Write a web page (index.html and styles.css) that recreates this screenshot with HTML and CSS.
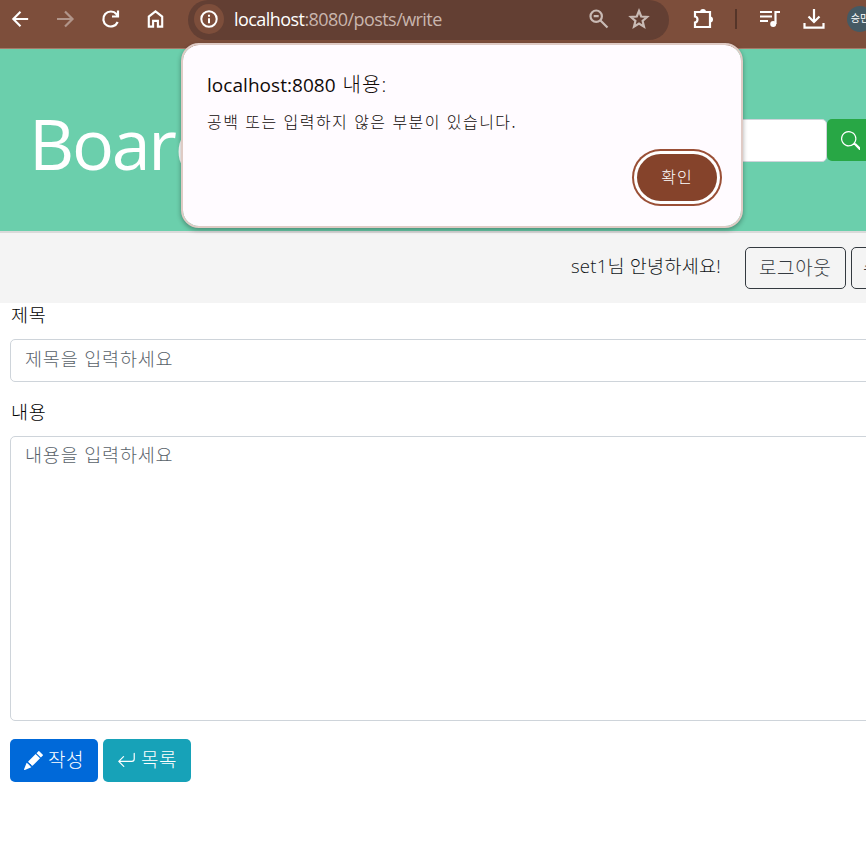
FILE: index.html
```html
<!DOCTYPE html>
<html lang="ko">
<head>
<meta charset="utf-8">
<title>Board</title>
<link rel="stylesheet" href="styles.css">
</head>
<body>
<div class="browser">
  <svg class="ic back" viewBox="0 0 24 24"><path d="M20 12H4.500M12 4.500 4.500 12l7.500 7.500"/></svg>
  <svg class="ic forward" viewBox="0 0 24 24"><path d="M4 12h15.500M12 4.500 19.500 12 12 19.500"/></svg>
  <svg class="ic reload" viewBox="0 0 24 24"><path d="M18.700 15A7.500 7.500 0 1 1 17.600 7.200L19 9M19 3.500v6h-6"/></svg>
  <svg class="ic home" viewBox="0 0 24 24"><path d="M5 20V9.500l7-5.500 7 5.500V20h-4.500v-6h-5v6z"/></svg>
  <div class="omnibox">
    <span class="info"><svg viewBox="0 0 20 20"><circle cx="10" cy="10" r="7.700"/><path d="M10 9.200v5M10 5.700v2"/></svg></span>
    <span class="url">localhost<span>:8080/posts/write</span></span>
    <svg class="ic lens" viewBox="0 0 24 24"><circle cx="9.200" cy="9.200" r="5.700"/><path d="m13.500 13.500 7 7M6.700 9.200h5"/></svg>
    <svg class="ic star" viewBox="0 0 24 24"><path d="m12 4 2.200 5.500 5.900.5-4.500 3.900 1.400 5.800-5-3.100-5 3.100 1.400-5.800L3.900 10l5.900-.5z"/></svg>
  </div>
  <svg class="ic puzzle" viewBox="0 0 24 24"><path d="M4 5h15v15H4v-4.500c3.300-.5 3.300-5.500 0-6z"/><path class="solid" d="M9 5a3 3 0 0 1 6 0zM19 9.500a3 3 0 0 1 0 6z"/></svg>
  <span class="divider"></span>
  <svg class="ic music" viewBox="0 0 24 24"><path d="M2 5h12M2 9.500h12M2 14h8M17.500 17V5H22"/><circle class="solid" cx="15.200" cy="17" r="3"/></svg>
  <svg class="ic download" viewBox="0 0 24 24"><path d="M12 2v13M6.500 9.500 12 15l5.500-5.500M2.500 16v4.700h19V16"/></svg>
  <span class="avatar">승민</span>
</div>
<header class="hero">
  <h1>Board</h1>
  <form class="search"><input aria-label="search"><button type="button" aria-label="search"><svg viewBox="0 0 16 16"><path d="M11.742 10.344a6.500 6.500 0 1 0-1.397 1.398h-.001c.3.040.62.078.98.115l3.850 3.850a1 1 0 0 0 1.415-1.414l-3.850-3.850a1 1 0 0 0-.115-.1zM12 6.500a5.500 5.500 0 1 1-11 0 5.500 5.500 0 0 1 11 0z"/></svg></button></form>
</header>
<nav class="userbar">
  <span class="hello">set1님 안녕하세요!</span>
  <button class="outline">로그아웃</button>
  <button class="outline">수정</button>
</nav>
<main>
  <label for="title">제목</label>
  <input id="title" class="field" placeholder="제목을 입력하세요">
  <label for="content">내용</label>
  <textarea id="content" class="field" placeholder="내용을 입력하세요"></textarea>
  <div class="actions">
    <button class="btn write"><svg viewBox="0 0 16 16"><path d="M12.854.146a.5.5 0 0 0-.707 0L10.500 1.793 14.207 5.500l1.647-1.646a.5.5 0 0 0 0-.708zm.646 6.061L9.793 2.500 3.293 9H3.500a.5.5 0 0 1 .5.5v.5h.5a.5.5 0 0 1 .5.5v.5h.5a.5.5 0 0 1 .5.5v.5h.5a.5.5 0 0 1 .5.5v.207zm-7.468 7.468A.5.5 0 0 1 6 13.500V13h-.5a.5.5 0 0 1-.5-.5V12h-.5a.5.5 0 0 1-.5-.5V11h-.5a.5.5 0 0 1-.5-.5V10h-.5a.5.5 0 0 1-.175-.032l-.179.178a.5.5 0 0 0-.11.168l-2 5a.5.5 0 0 0 .65.650l5-2a.5.5 0 0 0 .168-.11z"/></svg><span>작성</span></button>
    <button class="btn list"><svg viewBox="0 0 16 16"><path d="M14.500 1.500a.5.5 0 0 1 .5.5v4.800a2.500 2.500 0 0 1-2.500 2.500H2.707l3.347 3.346a.5.5 0 0 1-.708.708l-4.200-4.200a.5.5 0 0 1 0-.708l4-4a.5.5 0 1 1 .708.708L2.707 8.300H12.500A1.500 1.500 0 0 0 14 6.800V2a.5.5 0 0 1 .5-.5z"/></svg><span>목록</span></button>
  </div>
</main>
<section class="dialog" role="dialog">
  <h2>localhost:8080 <span>내용:</span></h2>
  <p>공백 또는 입력하지 않은 부분이 있습니다.</p>
  <button>확인</button>
</section>
</body>
</html>
```
FILE: styles.css
```css
* { box-sizing: border-box; }
body { margin: 0; height: 857px; overflow: hidden; position: relative; background: #fff; color: #212529; font: 300 18px/27px "Open Sans", "Noto Sans CJK KR", sans-serif; }
button, input, textarea { font: inherit; margin: 0; }
.browser { height: 49px; background: #7d4e3b; border-bottom: 1px solid #a57a69; display: flex; align-items: flex-start; overflow: hidden; color: #fff; }
.ic { width: 24px; height: 24px; flex: none; fill: none; stroke: #fff; stroke-width: 2.2; margin-top: 7px; }
.ic .solid { fill: #fff; stroke: none; }
.back { margin-left: 9px; width: 23px; }
.forward { margin-left: 21px; stroke: #b1958a; }
.reload { margin-left: 22px; }
.home { margin-left: 21px; width: 23px; }
.omnibox { width: 481px; height: 40px; margin-left: 21px; flex: none; border-radius: 20px; background: #633f33; display: flex; }
.omnibox .ic { stroke: #c9bab4; }
.info { width: 30px; height: 30px; margin: 4px 0 0 6px; border-radius: 50%; background: #7d4e3b; display: flex; align-items: center; justify-content: center; flex: none; }
.info svg { width: 20px; height: 20px; fill: none; stroke: #fff; stroke-width: 2; }
.url { font: 400 18px/28px "Open Sans", sans-serif; letter-spacing: -.56px; margin: 5px 0 0 10px; width: 353px; white-space: nowrap; }
.url span { color: #c9b5ad; }
.star { margin-left: 16px; }
.puzzle { margin-left: 22px; }
.divider { width: 2px; height: 20px; background: #553529; margin: 9px 0 0 20px; flex: none; }
.music { margin-left: 21px; }
.download { margin-left: 20px; }
.avatar { width: 26px; height: 26px; margin: 6px 0 0 21px; flex: none; border-radius: 50%; background: #455a64; font-size: 10px; line-height: 25px; text-align: center; font-weight: 400; white-space: nowrap; }
.hero { height: 184px; background: #6bcfac; border-bottom: 2px solid #dadada; display: flex; justify-content: space-between; align-items: flex-start; }
h1 { margin: 40px 0 0 29px; font: 400 70px/108px "Open Sans", sans-serif; letter-spacing: -2.3px; color: #fff; }
.search { margin: 70px -12px 0 0; display: flex; }
.search input { width: 227px; height: 43px; border: 1px solid #ced4da; border-radius: 5px; background: #fff; }
.search button { width: 51px; height: 42px; border: 0; border-radius: 5px; background: #28a745; padding: 0 0 0 14px; display: flex; align-items: center; }
.search svg { width: 19px; height: 19px; fill: #fff; }
.userbar { height: 70px; background: #f4f4f4; display: flex; overflow: hidden; padding: 14px 0 0 571px; align-items: flex-start; }
.hello { margin-top: 5px; width: 174px; flex: none; white-space: nowrap; font-size: 18.5px; letter-spacing: .25px; color: #101418; }
.outline { width: 101px; height: 42px; flex: none; margin-right: 5px; padding: 0 13px; border: 1px solid #343a40; border-radius: 5px; background: transparent; color: #343a40; font-size: 19px; letter-spacing: .6px; text-align: left; white-space: nowrap; }
.outline:last-child { padding-left: 11px; }
main { padding: 0 0 0 10px; display: flex; flex-direction: column; overflow: hidden; }
label { height: 27px; margin: 0 0 9px 1px; line-height: 23px; color: #000; font-size: 18.5px; letter-spacing: .8px; }
.field { width: 1000px; flex: none; border: 1px solid #ced4da; border-radius: 5px; padding: 5px 14px 9px; resize: none; display: block; font-size: 18.5px; letter-spacing: .83px; }
.field::placeholder { color: #59626a; opacity: 1; }
#title { height: 43px; margin-bottom: 18px; }
#content { height: 285px; padding-top: 4px; }
.actions { display: flex; gap: 5px; margin-top: 18px; }
.btn { width: 88px; height: 43px; border: 0; border-radius: 5px; padding: 0 0 1px 14px; color: #fff; display: flex; align-items: center; gap: 5px; font-size: 19px; letter-spacing: .5px; white-space: nowrap; }
.btn svg { width: 19px; height: 19px; fill: #fff; flex: none; }
.write { background: #0069d9; }
.list { background: #17a2b8; }
.dialog { position: absolute; left: 181px; top: 43px; width: 562px; height: 185px; border: 2px solid #dfcbc5; border-radius: 18px; background: #fffbff; background-clip: padding-box; box-shadow: 0 2px 5px #0005; padding: 25px 19px 0 24px; display: flex; flex-direction: column; color: #100a08; }
.dialog h2 { margin: 0; font: 400 19px/29px "Open Sans", "Noto Sans CJK KR", sans-serif; letter-spacing: .04px; }
.dialog h2 span { font-weight: 300; font-size: 20px; letter-spacing: 1px; margin-left: 2px; }
.dialog p { margin: 10px 0 0; font: 300 16px/22px "Noto Sans CJK KR", sans-serif; letter-spacing: 1.45px; white-space: nowrap; }
.dialog button { align-self: flex-end; width: 80px; height: 47px; margin: 22px 5px 0 0; padding: 0 0 0; border: 0; border-radius: 24px; background: #85432b; color: #fff; font-size: 16px; letter-spacing: 1px; box-shadow: 0 0 0 3px #fff, 0 0 0 5px #9a4f36; }
```
